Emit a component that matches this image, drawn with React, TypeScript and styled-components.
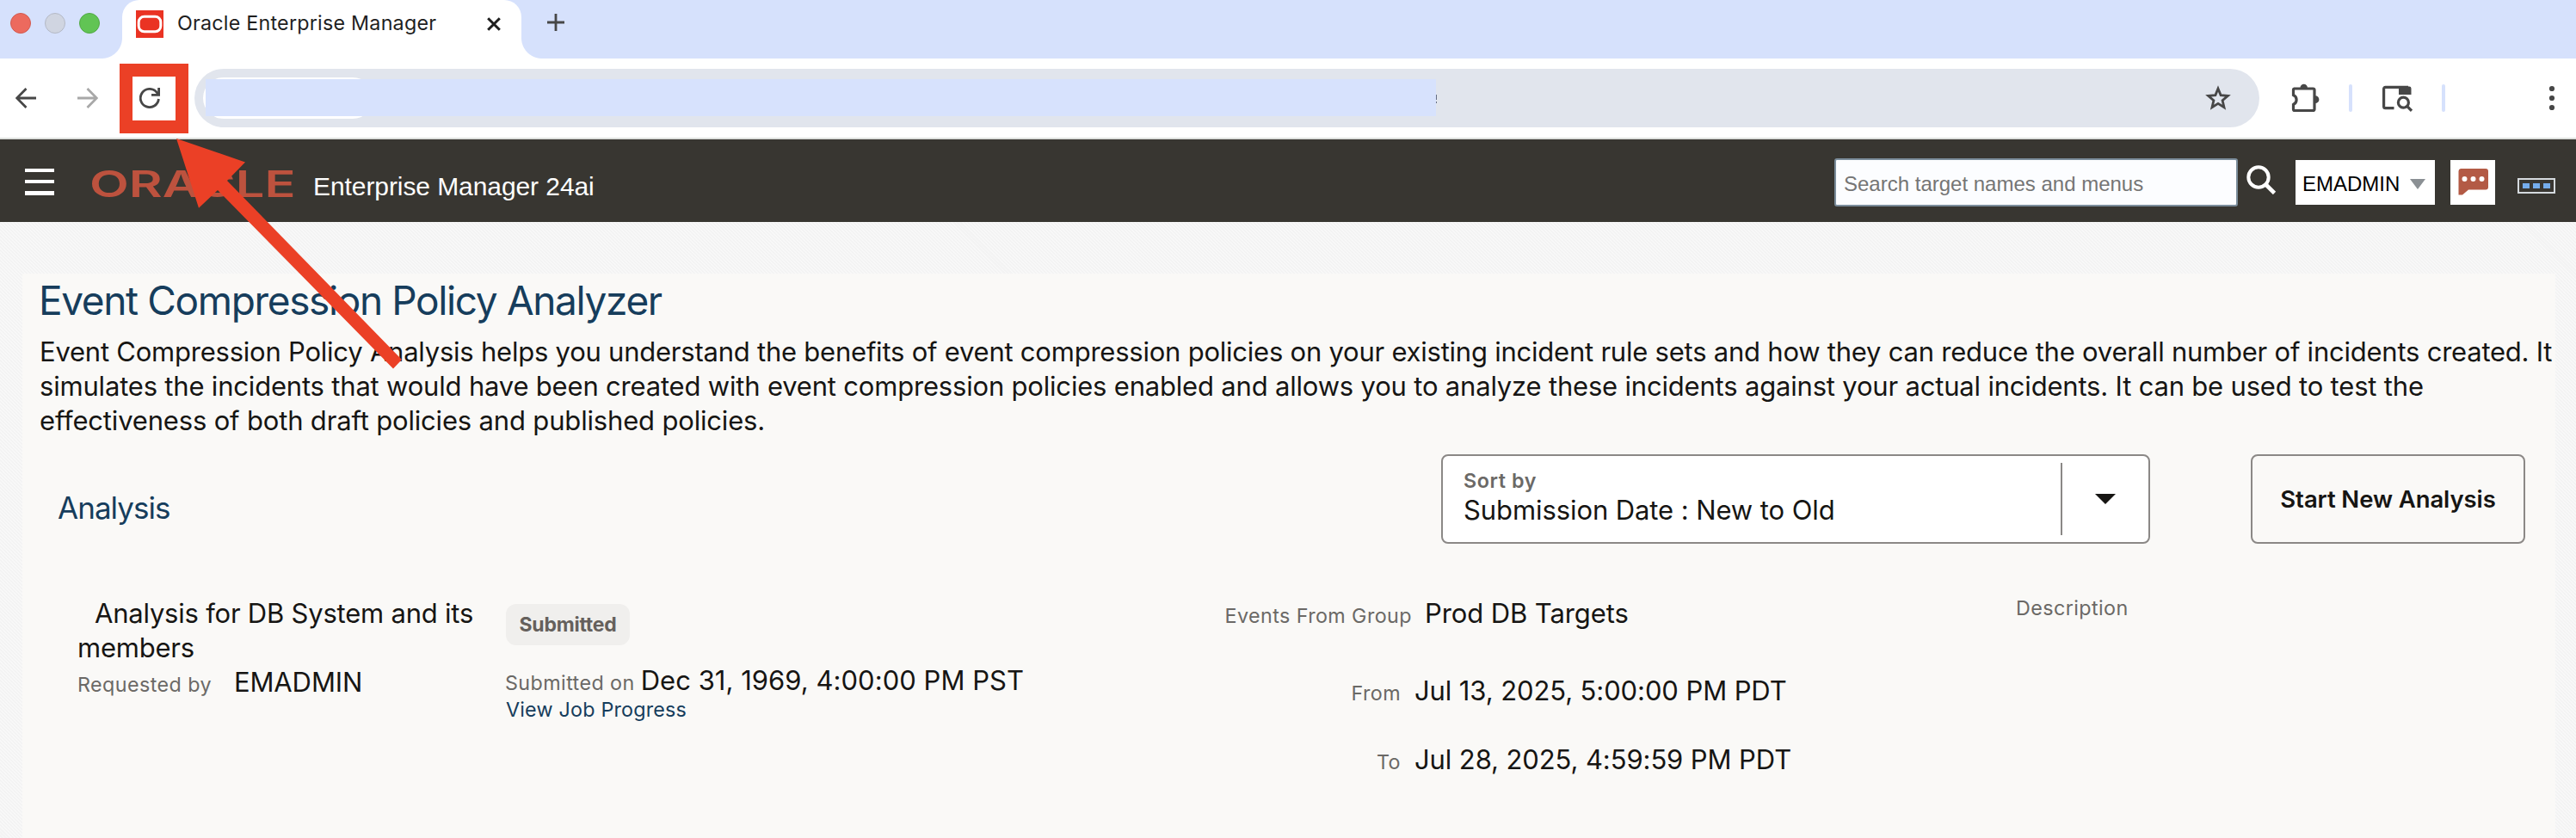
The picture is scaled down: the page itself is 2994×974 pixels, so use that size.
import React from 'react';
import styled, { createGlobalStyle } from 'styled-components';

const strip = '#d6e1fc';
const ink = '#161513';
const muted = '#6b6966';
const navy = '#163d5c';
const signal = '#eb4026';
const icon = '#474747';

const GlobalStyle = createGlobalStyle`
  *, *::before, *::after { box-sizing: border-box; }
  body { margin: 0; background: #f6f6f6; overflow: hidden; }
  svg { display: block; flex: none; }
`;

const Page = styled.div`
  position: relative;
  width: 2994px;
  height: 974px;
  display: flex;
  flex-direction: column;
  overflow: hidden;
  font-family: Inter, 'Noto Sans', sans-serif;
  color: ${ink};
  white-space: nowrap;
`;

/* Browser window */
const TabStrip = styled.div`
  height: 68px;
  flex: none;
  display: flex;
  background: ${strip};
`;
const WindowButtons = styled.div`
  display: flex;
  gap: 16px;
  padding: 15px 26px 0 12px;
`;
const Light = styled.span<{ $fill: string; $edge: string }>`
  width: 24px;
  height: 24px;
  border-radius: 50%;
  background: ${(p) => p.$fill};
  border: 1px solid ${(p) => p.$edge};
`;
const Tab = styled.div`
  position: relative;
  width: 464px;
  height: 68px;
  border-radius: 20px 20px 0 0;
  background: #fff;
  display: flex;
  padding: 12px 24px 0 16px;
  &::before,
  &::after {
    content: '';
    position: absolute;
    bottom: 0;
    width: 24px;
    height: 24px;
  }
  &::before {
    left: -24px;
    background: radial-gradient(circle at 0 0, ${strip} 23.5px, #fff 24.5px);
  }
  &::after {
    right: -24px;
    background: radial-gradient(circle at 100% 0, ${strip} 23.5px, #fff 24.5px);
  }
`;
const TabTitle = styled.span`
  margin-left: 16px;
  margin-top: 1px;
  flex: 1;
  font-size: 23.3px;
  line-height: 28px;
  letter-spacing: 0.22px;
  color: #1f1f1f;
`;
const TabClose = styled.span`
  padding-top: 8px;
`;
const NewTab = styled.span`
  padding: 16px 0 0 30px;
`;
const Toolbar = styled.div`
  height: 94px;
  flex: none;
  display: flex;
  align-items: center;
  padding-left: 18px;
  background: #fff;
  border-bottom: 2px solid #dddfdc;
`;
const Forward = styled.span`
  margin-left: 48px;
`;
const ReloadFrame = styled.span`
  width: 80px;
  height: 81px;
  margin-left: 25px;
  padding-left: 8px;
  border: 15px solid ${signal};
  display: flex;
  align-items: center;
`;
const AddressBar = styled.div`
  width: 2400px;
  height: 68px;
  margin-left: 7px;
  padding: 0 32px 0 10px;
  border-radius: 34px;
  background: #e1e5ed;
  display: flex;
  align-items: center;
`;
const SiteChip = styled.span`
  width: 198px;
  height: 48px;
  border-radius: 24px;
  background: #fff;
`;
const HiddenAddress = styled.span`
  width: 1430px;
  height: 43px;
  margin: 0 0 2px -195px;
  background: #d7e2fd;
`;
const Caret = styled.span`
  width: 1px;
  height: 10px;
  margin: 2px auto 0 0;
  border-top: 6px solid #666e84;
  border-bottom: 2px solid #666e84;
`;
const Extensions = styled.span`
  margin-left: 36px;
`;
const Divider = styled.span<{ $left: number; $right: number }>`
  width: 4px;
  height: 32px;
  border-radius: 2px;
  background: ${strip};
  margin: 0 ${(p) => p.$right}px 0 ${(p) => p.$left}px;
`;

/* Application header */
const AppHeader = styled.header`
  height: 96px;
  flex: none;
  display: flex;
  align-items: center;
  padding: 4px 24px 0 29px;
  background: #383631;
  font-family: 'Liberation Sans', Arial, sans-serif;
`;
const MenuLines = styled.span`
  width: 34px;
  height: 31px;
  margin-bottom: 2px;
  display: flex;
  flex-direction: column;
  justify-content: space-between;
`;
const MenuLine = styled.i`
  height: 4.5px;
  background: #fff;
`;
const Wordmark = styled.span`
  width: 260px;
  margin-left: 41px;
  padding-top: 3px;
  font: 600 42px/48px Inter, sans-serif;
  color: #bd523e;
`;
const WordmarkText = styled.span`
  display: inline-block;
  transform: scaleX(1.42);
  transform-origin: 0 50%;
`;
const ProductName = styled.span`
  padding-top: 10px;
  margin-right: auto;
  font-size: 30px;
  line-height: 36px;
  letter-spacing: -0.08px;
  color: #fff;
`;
const SearchBox = styled.div`
  width: 469px;
  height: 56px;
  padding: 4px 0 0 9px;
  border: 2px solid #7b8d9b;
  border-radius: 3px;
  background: #fcfdff;
  font-size: 24px;
  line-height: 48px;
  color: #757575;
`;
const SearchIcon = styled.span`
  margin: 0 22px 7px 10px;
`;
const UserMenu = styled.div`
  width: 162px;
  height: 52px;
  padding: 4px 0 0 8px;
  background: #fff;
  display: flex;
  align-items: center;
  gap: 12px;
  font-size: 24px;
  color: #000;
`;
const ChatButton = styled.span`
  width: 52px;
  height: 52px;
  margin: 0 26px 0 18px;
  padding: 10px 0 0 9px;
  background: #fff;
`;
const MoreBox = styled.span`
  width: 44px;
  height: 18px;
  margin-top: 8px;
  border: 2px solid #d5dade;
  display: flex;
  align-items: center;
  justify-content: center;
  gap: 4px;
`;
const MoreDot = styled.i`
  width: 8px;
  height: 6px;
  background: #75adec;
`;

/* Content */
const Backdrop = styled.main`
  flex: 1;
  padding: 60px 24px 0 26px;
  display: flex;
  background: repeating-linear-gradient(45deg, #f8f8f8 0 1.41px, #f3f3f3 1.41px 2.83px);
`;
const Panel = styled.section`
  flex: 1;
  padding-top: 3px;
  background: #faf9f7;
`;
const Title = styled.h1`
  margin: 0 0 12px 19px;
  font-size: 46px;
  font-weight: 400;
  line-height: 56px;
  letter-spacing: -1.37px;
  color: ${navy};
`;
const Intro = styled.p`
  margin: 0 0 19px 20px;
  font-size: 31px;
  line-height: 40px;
`;
const IntroLine = styled.span<{ $track: number }>`
  display: block;
  letter-spacing: ${(p) => p.$track}px;
`;
const Controls = styled.div`
  height: 104px;
  display: flex;
  padding: 0 35px 0 41px;
`;
const SectionTitle = styled.h2`
  margin: 40px auto 0 0;
  font-size: 35px;
  font-weight: 400;
  line-height: 44px;
  letter-spacing: -0.97px;
  color: ${navy};
`;
const SortSelect = styled.div`
  width: 824px;
  border: 2px solid #8b8886;
  border-radius: 8px;
  background: #fff;
  display: flex;
`;
const SortText = styled.div`
  width: 720px;
  margin: 8px 0;
  padding: 7px 0 0 24px;
  border-right: 2px solid #8b8886;
`;
const SortLabel = styled.div`
  font-size: 23.3px;
  font-weight: 600;
  line-height: 28px;
  letter-spacing: 0.6px;
  color: #6b6966;
`;
const SortValue = styled.div`
  font-size: 31px;
  line-height: 40px;
  letter-spacing: -0.09px;
`;
const SortArrow = styled.span`
  margin: 44px 0 0 38px;
`;
const StartButton = styled.button`
  width: 319px;
  margin-left: 117px;
  padding: 0;
  border: 2px solid #8b8886;
  border-radius: 8px;
  background: transparent;
  font: 600 27.5px/40px Inter, sans-serif;
  letter-spacing: -0.09px;
  color: ${ink};
`;
const AnalysisRow = styled.div`
  margin-top: 61px;
  padding-left: 64px;
  display: grid;
  grid-template-columns: 497px 836px 920px auto;
  font-size: 31px;
  line-height: 40px;
`;
const Column = styled.div`
  display: flex;
  flex-direction: column;
  align-items: flex-start;
`;
const AnalysisName = styled.div`
  width: 480px;
  text-indent: 20px;
  letter-spacing: -0.22px;
  white-space: normal;
`;
const Field = styled.div<{ $gap: number; $before?: number; $labelWidth?: number }>`
  display: flex;
  align-items: baseline;
  gap: ${(p) => p.$gap}px;
  margin-top: ${(p) => p.$before ?? 0}px;
  & > :first-child {
    width: ${(p) => (p.$labelWidth ? `${p.$labelWidth}px` : 'auto')};
    text-align: right;
  }
`;
const Label = styled.span`
  font-size: 23.3px;
  line-height: 28px;
  letter-spacing: 0.42px;
  color: ${muted};
`;
const Value = styled.span<{ $track?: number }>`
  letter-spacing: ${(p) => p.$track ?? 0}px;
`;
const Badge = styled.span`
  height: 48px;
  width: 144px;
  margin: 9px 0 21px 1px;
  border-radius: 12px;
  background: #f0efed;
  text-align: center;
  font-size: 23px;
  font-weight: 700;
  line-height: 49px;
  letter-spacing: -0.25px;
  color: #65605c;
`;
const JobLink = styled.a`
  margin-left: 1px;
  font-size: 23.3px;
  line-height: 28px;
  letter-spacing: 0.2px;
  color: ${navy};
`;

/* Callout arrow pointing at the reload button */
const Callout = styled.svg`
  position: absolute;
  left: 200px;
  top: 156px;
`;

export default function App() {
  return (
    <Page>
      <GlobalStyle />
      <TabStrip>
        <WindowButtons>
          <Light $fill="#ec6a5e" $edge="#d25a4f" />
          <Light $fill="#d0d5e1" $edge="#b4b9c6" />
          <Light $fill="#61c454" $edge="#52a945" />
        </WindowButtons>
        <Tab>
          <svg width="32" height="32" viewBox="0 0 32 32">
            <rect width="32" height="32" fill="#ea3323" />
            <rect x="3.2" y="7.2" width="25.6" height="17.6" rx="6.5" fill="none" stroke="#fff" strokeWidth="3" />
          </svg>
          <TabTitle>Oracle Enterprise Manager</TabTitle>
          <TabClose>
            <svg width="16" height="16" viewBox="0 0 16 16">
              <path d="M1.2 1.2 14.8 14.8M14.8 1.2 1.2 14.8" stroke="#1f1f1f" strokeWidth="3" />
            </svg>
          </TabClose>
        </Tab>
        <NewTab>
          <svg width="20" height="20" viewBox="0 0 20 20">
            <path d="M10 0V20M0 10H20" stroke={icon} strokeWidth="2.8" />
          </svg>
        </NewTab>
      </TabStrip>

      <Toolbar>
        <svg width="24" height="24" viewBox="0 0 24 24" fill="none" stroke={icon} strokeWidth="2.8">
          <path d="M24 12H2M12.5 1 1.6 12 12.5 23" />
        </svg>
        <Forward>
          <svg width="24" height="24" viewBox="0 0 24 24" fill="none" stroke="#a8a8a8" strokeWidth="2.8">
            <path d="M0 12H22M11.5 1 22.4 12 11.5 23" />
          </svg>
        </Forward>
        <ReloadFrame>
          <svg width="24" height="24" viewBox="0 0 24 24" fill="none" stroke={icon} strokeWidth="2.8">
            <path d="M22.4 13A10.6 10.6 0 1 1 20 5.2L22 7.6" />
            <path d="M22.6 0V8.4H14" />
          </svg>
        </ReloadFrame>
        <AddressBar>
          <SiteChip />
          <HiddenAddress />
          <Caret />
          <svg width="32" height="30" viewBox="0 0 32 30">
            <path
              d="M16 4 19.1 11.6 27.4 12.3 21.1 17.7 23 25.7 16 21.4 9 25.7 10.9 17.7 4.6 12.3 12.9 11.6Z"
              fill="none"
              stroke={icon}
              strokeWidth="2.8"
            />
          </svg>
        </AddressBar>
        <Extensions>
          <svg width="34" height="36" viewBox="0 0 34 36">
            <path
              d="M4 7H26.5a1.5 1.5 0 0 1 1.5 1.5V31a1.5 1.5 0 0 1-1.5 1.5H5A1.5 1.5 0 0 1 3.5 31V25.5a6 6 0 0 0 0-11V8.5A1.5 1.5 0 0 1 5 7Z"
              fill="none"
              stroke={icon}
              strokeWidth="3.2"
            />
            <path d="M11.5 6a4.2 4.2 0 0 1 8.4 0ZM29 15.3a4.4 4.4 0 0 1 0 8.8Z" fill={icon} />
          </svg>
        </Extensions>
        <Divider $left={34} $right={34} />
        <svg width="36" height="32" viewBox="0 0 36 32" fill="none" stroke={icon} strokeWidth="3.2">
          <path d="M14.5 27.6H4.5A1.9 1.9 0 0 1 2.6 25.7V5.2A1.9 1.9 0 0 1 4.5 3.3H31" />
          <path d="M20 2.5H32.2A2.3 2.3 0 0 1 34.5 4.8V12H20Z" fill={icon} stroke="none" />
          <circle cx="25.4" cy="21.2" r="6" />
          <path d="M29.6 25.4 35 30.8" />
        </svg>
        <Divider $left={34} $right={120} />
        <svg width="8" height="32" viewBox="0 0 8 32" fill={icon}>
          <circle cx="4" cy="5" r="3.1" />
          <circle cx="4" cy="16" r="3.1" />
          <circle cx="4" cy="27" r="3.1" />
        </svg>
      </Toolbar>

      <AppHeader>
        <MenuLines>
          <MenuLine />
          <MenuLine />
          <MenuLine />
        </MenuLines>
        <Wordmark>
          <WordmarkText>ORACLE</WordmarkText>
        </Wordmark>
        <ProductName>Enterprise Manager 24ai</ProductName>
        <SearchBox>Search target names and menus</SearchBox>
        <SearchIcon>
          <svg width="35" height="34" viewBox="0 0 35 34" fill="none" stroke="#fff">
            <circle cx="14" cy="14" r="11.7" strokeWidth="4" />
            <path d="M22 22 32.5 32.5" strokeWidth="4.6" />
          </svg>
        </SearchIcon>
        <UserMenu>
          EMADMIN
          <svg width="18" height="12" viewBox="0 0 18 12">
            <path d="M0 0H18L9 12Z" fill="#8b9094" />
          </svg>
        </UserMenu>
        <ChatButton>
          <svg width="35" height="31" viewBox="0 0 35 31">
            <path d="M3 0H32a3 3 0 0 1 3 3V21.5a3 3 0 0 1-3 3H12L5 30.5H.5V3A3 3 0 0 1 3 0Z" fill="#b35a45" />
            <circle cx="7.5" cy="12" r="3" fill="#fff" />
            <circle cx="17.5" cy="12" r="3" fill="#fff" />
            <circle cx="27.5" cy="12" r="3" fill="#fff" />
          </svg>
        </ChatButton>
        <MoreBox>
          <MoreDot />
          <MoreDot />
          <MoreDot />
        </MoreBox>
      </AppHeader>

      <Backdrop>
        <Panel>
          <Title>Event Compression Policy Analyzer</Title>
          <Intro>
            <IntroLine $track={-0.23}>
              Event Compression Policy Analysis helps you understand the benefits of event compression policies on your
              existing incident rule sets and how they can reduce the overall number of incidents created. It
            </IntroLine>
            <IntroLine $track={-0.19}>
              simulates the incidents that would have been created with event compression policies enabled and allows
              you to analyze these incidents against your actual incidents. It can be used to test the
            </IntroLine>
            <IntroLine $track={-0.17}>effectiveness of both draft policies and published policies.</IntroLine>
          </Intro>
          <Controls>
            <SectionTitle>Analysis</SectionTitle>
            <SortSelect>
              <SortText>
                <SortLabel>Sort by</SortLabel>
                <SortValue>Submission Date : New to Old</SortValue>
              </SortText>
              <SortArrow>
                <svg width="24" height="12" viewBox="0 0 24 12">
                  <path d="M0 0H24L12 12Z" fill={ink} />
                </svg>
              </SortArrow>
            </SortSelect>
            <StartButton>Start New Analysis</StartButton>
          </Controls>
          <AnalysisRow>
            <Column>
              <AnalysisName>Analysis for DB System and its members</AnalysisName>
              <Field $gap={26}>
                <Label>Requested by</Label>
                <Value $track={-0.1}>EMADMIN</Value>
              </Field>
            </Column>
            <Column>
              <Badge>Submitted</Badge>
              <Field $gap={7}>
                <Label>Submitted on</Label>
                <Value $track={0.03}>Dec 31, 1969, 4:00:00 PM PST</Value>
              </Field>
              <JobLink>View Job Progress</JobLink>
            </Column>
            <Column>
              <Field $gap={15} $labelWidth={218}>
                <Label>Events From Group</Label>
                <Value $track={-0.1}>Prod DB Targets</Value>
              </Field>
              <Field $gap={16} $before={50} $labelWidth={205}>
                <Label>From</Label>
                <Value $track={-0.1}>Jul 13, 2025, 5:00:00 PM PDT</Value>
              </Field>
              <Field $gap={16} $before={40} $labelWidth={205}>
                <Label>To</Label>
                <Value $track={-0.1}>Jul 28, 2025, 4:59:59 PM PDT</Value>
              </Field>
            </Column>
            <Column>
              <Label>Description</Label>
            </Column>
          </AnalysisRow>
        </Panel>
      </Backdrop>

      <Callout width="280" height="280" viewBox="200 156 280 280">
        <path d="M205 161 285 188.5 264 210 467 418 457 428.5 253 221 231 241.7Z" fill={signal} />
      </Callout>
    </Page>
  );
}
